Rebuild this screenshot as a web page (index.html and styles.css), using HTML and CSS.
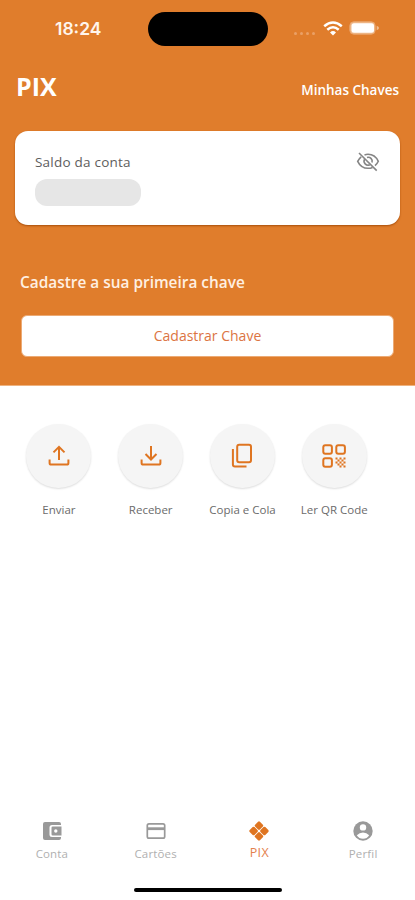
FILE: index.html
```html
<!DOCTYPE html>
<html lang="pt-BR">
<head>
<meta charset="utf-8">
<meta name="viewport" content="width=device-width">
<title>PIX</title>
<link rel="stylesheet" href="styles.css">
</head>
<body>
<header class="hero">
  <div class="status">
    <span class="time">18:24</span>
    <span class="island"></span>
    <span class="signals">
      <span class="dots"><i></i><i></i><i></i><i></i></span>
      <svg class="wifi" width="20" height="15" viewBox="0 0 20 15" fill="none" stroke="#fff" stroke-width="2.5"><path d="M1.2 5.2Q10-2.2 18.8 5.2M4.3 8.8Q10 3.8 15.7 8.8"/><path d="M7 11.4Q10 8.8 13 11.4L10 14.4Z" fill="#fff" stroke="none"/></svg>
      <svg class="battery" width="31" height="14" viewBox="0 0 31 14"><rect x=".8" y=".8" width="25.4" height="12.4" rx="4" fill="#f0bb8e" stroke="#e9a46b"/><rect x="2.5" y="2.3" width="22.5" height="9.4" rx="2.5" fill="#fff"/><path d="M27.7 4.8Q30 5.5 30 7T27.7 9.2Z" fill="#f0bb8e"/></svg>
    </span>
  </div>
  <div class="title-row"><h1>PIX</h1><a class="keys">Minhas Chaves</a></div>
  <section class="balance">
    <div><p class="balance-label">Saldo da conta</p><div class="hidden-value"></div></div>
    <svg class="eye" width="24" height="20" viewBox="0 0 24 20" fill="none" stroke="#858585" stroke-width="1.6"><path d="M5.2 4.8Q3 6.6 1.7 9.3Q5 16.3 12 16.3Q14.5 16.3 16.6 15.4M8.5 2.9Q10.1 2.3 12 2.3Q19 2.3 22.3 9.3Q21.2 11.8 19 13.6"/><path d="M8.6 7.2A4 4 0 0 0 13.8 12.8M11 5.4A4 4 0 0 1 16 10.4"/><path d="M3 1L20.7 18.6"/></svg>
  </section>
  <h2>Cadastre a sua primeira chave</h2>
  <button class="register"><span>Cadastrar Chave</span></button>
</header>
<main class="actions">
  <div class="action"><span class="circle"><svg width="28" height="28" viewBox="0 0 28 28" fill="none" stroke="#df7521" stroke-width="2"><path d="M14 18V5M8.5 10.4L14 4.9L19.5 10.4M4.6 17.5V21Q4.6 22.6 6.2 22.6H21.8Q23.4 22.6 23.4 21V17.5"/></svg></span><span class="label">Enviar</span></div>
  <div class="action"><span class="circle"><svg width="28" height="28" viewBox="0 0 28 28" fill="none" stroke="#df7521" stroke-width="2"><path d="M14 4V17.3M8.5 12L14 17.5L19.5 12M4.6 17.5V21Q4.6 22.6 6.2 22.6H21.8Q23.4 22.6 23.4 21V17.5"/></svg></span><span class="label">Receber</span></div>
  <div class="action"><span class="circle"><svg width="28" height="28" viewBox="0 0 28 28" fill="none" stroke="#df7521" stroke-width="2"><rect x="9.2" y="2.8" width="13.8" height="17.4" rx="2"/><path d="M4.9 7V22.5Q4.9 24.5 6.9 24.5H18.5"/></svg></span><span class="label">Copia e Cola</span></div>
  <div class="action"><span class="circle"><svg width="28" height="28" viewBox="0 0 28 28" fill="none" stroke="#df7521" stroke-width="2"><rect x="3.3" y="3.2" width="8.6" height="8.6" rx="2"/><rect x="16.3" y="3.2" width="8.6" height="8.6" rx="2"/><rect x="3.3" y="16.2" width="8.6" height="8.6" rx="2"/><path fill="#df7521" stroke="none" d="M15.5 15.5h2v2h-2zM19.5 15.5h2v2h-2zM17.5 17.5h2v2h-2zM21.5 17.5h2v2h-2zM23.5 15.5h2v2h-2zM15.5 19.5h2v2h-2zM19.5 19.5h2v2h-2zM23.5 19.5h2v2h-2zM17.5 21.5h2v2h-2zM21.5 21.5h2v2h-2zM19.5 23.5h2v2h-2zM23.5 23.5h2v2h-2z"/></svg></span><span class="label">Ler QR Code</span></div>
</main>
<nav class="tabs">
  <a class="tab"><svg width="22" height="22" viewBox="0 0 22 22"><path fill="#999" d="M4 2H18Q20 2 20 4V5H11Q8.5 5 8.5 7.5V14.5Q8.5 17 11 17H20V18Q20 20 18 20H4Q2 20 2 18V4Q2 2 4 2Z"/><path fill="#999" fill-rule="evenodd" d="M11.8 6.5H20.5V15.5H11.8Q10.5 15.5 10.5 14.2V7.8Q10.5 6.5 11.8 6.5ZM14.8 9.3A1.6 1.6 0 1 0 14.8 12.7A1.6 1.6 0 1 0 14.8 9.3Z"/></svg><span>Conta</span></a>
  <a class="tab"><svg width="22" height="22" viewBox="0 0 22 22" fill="none" stroke="#999"><rect x="2.3" y="3.8" width="17.4" height="14.4" rx="1.7" stroke-width="1.7"/><path stroke-width="2.8" d="M2.3 8.7H19.7"/></svg><span>Cartões</span></a>
  <a class="tab active"><svg width="22" height="22" viewBox="0 0 22 22" fill="#df7521"><rect x="-3.4" y="-3.4" width="6.8" height="6.8" rx="1.3" transform="translate(11 5.6) rotate(45)"/><rect x="-3.4" y="-3.4" width="6.8" height="6.8" rx="1.3" transform="translate(16.4 11) rotate(45)"/><rect x="-3.4" y="-3.4" width="6.8" height="6.8" rx="1.3" transform="translate(11 16.4) rotate(45)"/><rect x="-3.4" y="-3.4" width="6.8" height="6.8" rx="1.3" transform="translate(5.6 11) rotate(45)"/></svg><span class="pix">PIX</span></a>
  <a class="tab"><svg width="22" height="22" viewBox="0 0 22 22"><circle cx="11" cy="11" r="9.7" fill="#999"/><circle cx="11" cy="7.4" r="3.2" fill="#fff"/><path fill="#fff" d="M4.8 15.2Q7.5 12.5 11 12.5T17.2 15.2Q15 18.8 11 18.8T4.8 15.2Z"/></svg><span>Perfil</span></a>
</nav>
<div class="home"></div>
</body>
</html>
```
FILE: styles.css
```css
* { box-sizing: border-box; margin: 0; padding: 0; }
body { width: 415px; height: 900px; display: flex; flex-direction: column; background: #fff; font-family: "Open Sans", "Noto Sans", sans-serif; overflow: hidden; }
svg { display: block; flex: none; }
.hero { height: 386px; background: #e07d2c; border-bottom: 1px solid #eeb27f; flex: none; }
.status { height: 58px; padding: 12px 34px 0 55px; display: grid; grid-template-columns: 93px 120px 1fr; }
.time { font: 600 17.5px/34px Inter, sans-serif; color: #fff5ec; }
.island { height: 34px; border-radius: 17px; background: #000; }
.signals { display: flex; align-items: center; justify-content: flex-end; height: 34px; padding-bottom: 2px; }
.dots { display: flex; gap: 3px; padding-top: 10px; margin-right: 8px; }
.dots i { width: 3px; height: 3px; border-radius: 2px; background: #eaa066; }
.battery { margin-left: 6px; margin-right: 1px; }
.title-row { height: 73px; display: flex; justify-content: space-between; padding: 12px 16px 0; color: #fff; }
h1 { font-size: 25px; line-height: 32px; font-weight: 700; }
.keys { font-size: 13.5px; font-weight: 600; line-height: 40px; }
.balance { height: 94px; margin: 0 15px; padding: 21px 20px 0; border-radius: 13px; background: #fff; box-shadow: 0 1px 2px #a94f0b; display: flex; justify-content: space-between; }
.balance-label { font-size: 13.5px; line-height: 20px; color: #5d5d5d; font-weight: 500; letter-spacing: .22px; }
.hidden-value { width: 106px; height: 27px; margin-top: 7px; border-radius: 12px; background: #e6e6e6; }
h2 { margin: 46px 0 0 20px; font-size: 15.4px; line-height: 24px; font-weight: 600; color: #fff0e2; white-space: nowrap; }
.register { display: block; width: 373px; height: 42px; margin: 20px 0 0 21px; border: 1px solid #ecaa74; border-radius: 6px; background: #fff; color: #dc7442; font: 500 14px/20px "Open Sans", sans-serif; }
.actions { display: flex; padding: 38px 0 0 13px; flex: 1; }
.action { width: 91.8px; display: flex; flex-direction: column; align-items: center; }
.circle { width: 65px; height: 64px; border-radius: 50%; background: #f5f5f5; box-shadow: 0 1px 2px #ddd; display: flex; align-items: center; justify-content: center; }
.circle svg { margin-top: -1px; }
.label { margin-top: 13px; font-size: 11.5px; line-height: 18px; color: #6b6b6b; white-space: nowrap; }
.tabs { display: grid; grid-template-columns: repeat(4, 1fr); height: 68px; flex: none; }
.tab { display: flex; flex-direction: column; align-items: center; font-size: 11.5px; line-height: 18px; color: #b0b0b0; }
.tab span { margin-top: 3px; letter-spacing: .15px; }
.active { color: #e4814d; font-size: 12.5px; }
.tab .pix { margin-top: 2px; letter-spacing: .4px; }
.home { width: 148px; height: 4px; border-radius: 2px; background: #000; margin: 0 auto 8px; flex: none; }
```
